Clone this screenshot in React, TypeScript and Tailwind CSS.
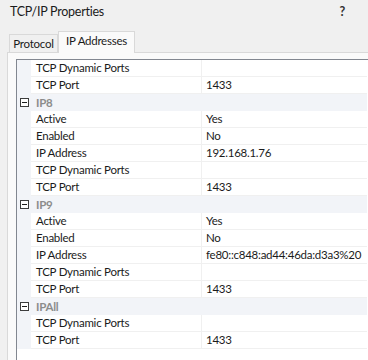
import React from "react";

type Row =
  | { kind: "cat"; label: string }
  | { kind: "prop"; label: string; value?: string };

const rows: Row[] = [
  { kind: "prop", label: "TCP Dynamic Ports" },
  { kind: "prop", label: "TCP Port", value: "1433" },
  { kind: "cat", label: "IP8" },
  { kind: "prop", label: "Active", value: "Yes" },
  { kind: "prop", label: "Enabled", value: "No" },
  { kind: "prop", label: "IP Address", value: "192.168.1.76" },
  { kind: "prop", label: "TCP Dynamic Ports" },
  { kind: "prop", label: "TCP Port", value: "1433" },
  { kind: "cat", label: "IP9" },
  { kind: "prop", label: "Active", value: "Yes" },
  { kind: "prop", label: "Enabled", value: "No" },
  { kind: "prop", label: "IP Address", value: "fe80::c848:ad44:46da:d3a3%20" },
  { kind: "prop", label: "TCP Dynamic Ports" },
  { kind: "prop", label: "TCP Port", value: "1433" },
  { kind: "cat", label: "IPAll" },
  { kind: "prop", label: "TCP Dynamic Ports" },
  { kind: "prop", label: "TCP Port", value: "1433" },
];

function Minus() {
  return (
    <span className="flex h-[9px] w-[9px] items-center justify-center border border-[#3c3c3c] bg-white">
      <span className="h-px w-[5px] bg-[#1e1e1e]" />
    </span>
  );
}

export default function App() {
  return (
    <div className="h-[360px] w-[368px] overflow-hidden bg-[#f0f0f0] font-['Lato',sans-serif] text-[11.5px] tracking-[-0.25px] text-[#1b1b1b]">
      <div className="flex h-[25px] items-center justify-between pl-[10px] pr-[23px] text-[12.5px]">
        <span>TCP/IP Properties</span>
        <span className="font-bold text-[#333]">?</span>
      </div>

      <div className="flex h-[27px] items-end pl-[9px]">
        <div className="flex h-[18px] w-[49px] items-center justify-center border border-b-0 border-[#d9d9d9] bg-[#f0f0f0] pt-[1px]">
          Protocol
        </div>
        <div className="relative z-10 -mb-px flex h-[22px] w-[77px] items-center justify-center border border-b-0 border-[#d9d9d9] bg-[#fafafa] pb-[3px]">
          IP Addresses
        </div>
      </div>

      <div className="ml-[7px] h-full border-l border-t border-[#d9d9d9] bg-[#fafafa] pl-[8px] pt-[6px]">
        <div className="h-full border-l border-t border-[#828790] bg-white pr-[1px]">
          {rows.map((r, i) =>
            r.kind === "cat" ? (
              <div key={i} className="flex h-[17px] items-center bg-[#f2f4f8]">
                <div className="flex w-[14px] shrink-0 justify-center pl-[1px]">
                  <Minus />
                </div>
                <span className="pl-[5px] font-bold text-[#8c8c8c]">{r.label}</span>
              </div>
            ) : (
              <div key={i} className="flex h-[17px] bg-[#f2f4f8]">
                <div className="w-[14px] shrink-0" />
                <div className="flex w-[171px] shrink-0 items-center border-b border-r border-[#f0f0f0] bg-white pl-[5px]">
                  {r.label}
                </div>
                <div className="flex flex-1 items-center border-b border-[#f0f0f0] bg-white pl-[4px]">
                  {r.value}
                </div>
              </div>
            )
          )}
        </div>
      </div>
    </div>
  );
}
